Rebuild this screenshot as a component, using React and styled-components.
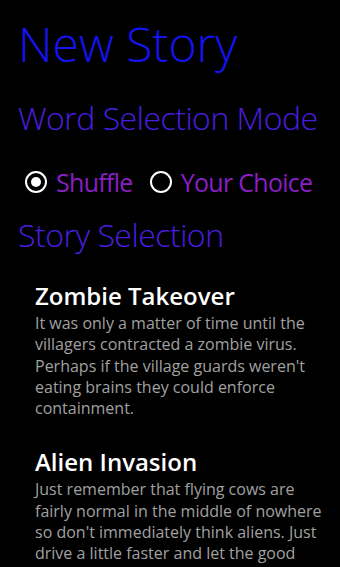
import React, { useState } from 'react';
import styled, { createGlobalStyle } from 'styled-components';

const GlobalStyle = createGlobalStyle`
  html, body {
    margin: 0;
    padding: 0;
    background: #000;
  }
  body {
    font-family: "Open Sans", "Noto Sans", sans-serif;
    overflow: hidden;
  }
`;

const stories = [
  {
    title: 'Zombie Takeover',
    text: "It was only a matter of time until the villagers contracted a zombie virus. Perhaps if the village guards weren't eating brains they could enforce containment.",
  },
  {
    title: 'Alien Invasion',
    text: "Just remember that flying cows are fairly normal in the middle of nowhere so don't immediately think aliens. Just drive a little faster and let the good people of the town deal with it.",
  },
];

export default function App() {
  const [mode, setMode] = useState('shuffle');

  return (
    <>
      <GlobalStyle />
      <Page>
        <PageTitle>New Story</PageTitle>
        <SectionTitle>Word Selection Mode</SectionTitle>
        <RadioRow>
          <RadioOption onClick={() => setMode('shuffle')}>
            <RadioCircle checked={mode === 'shuffle'} />
            <RadioLabel>Shuffle</RadioLabel>
          </RadioOption>
          <RadioOption onClick={() => setMode('choice')}>
            <RadioCircle checked={mode === 'choice'} />
            <RadioLabel>Your Choice</RadioLabel>
          </RadioOption>
        </RadioRow>
        <SectionTitle $tight>Story Selection</SectionTitle>
        <StoryList>
          {stories.map((s) => (
            <StoryItem key={s.title}>
              <StoryTitle>{s.title}</StoryTitle>
              <StoryText>{s.text}</StoryText>
            </StoryItem>
          ))}
        </StoryList>
      </Page>
    </>
  );
}

const Page = styled.div`
  height: 567px;
  overflow: hidden;
  padding: 12px 0 0 18px;
  box-sizing: border-box;
`;

const PageTitle = styled.h1`
  margin: 0;
  font-size: 48px;
  font-weight: 300;
  line-height: 64px;
  color: #1414f0;
`;

const SectionTitle = styled.h2`
  margin: ${(p) => (p.$tight ? '14px' : '20px')} 0 0;
  font-size: 32px;
  font-weight: 300;
  line-height: 44px;
  color: #4a1ee0;
  letter-spacing: -0.5px;
`;

const RadioRow = styled.div`
  display: flex;
  align-items: center;
  gap: 17px;
  padding-left: 7px;
  margin-top: 25px;
`;

const RadioOption = styled.label`
  display: flex;
  align-items: center;
  gap: 9px;
  cursor: pointer;
`;

const RadioCircle = styled.span`
  width: 22px;
  height: 22px;
  box-sizing: border-box;
  border: 2.5px solid #fff;
  border-radius: 50%;
  display: flex;
  align-items: center;
  justify-content: center;

  &::after {
    content: '';
    width: 10px;
    height: 10px;
    border-radius: 50%;
    background: #fff;
    display: ${(p) => (p.checked ? 'block' : 'none')};
  }
`;

const RadioLabel = styled.span`
  font-size: 25px;
  line-height: 34px;
  color: #8a1fc6;
  letter-spacing: -0.7px;
`;

const StoryList = styled.div`
  width: 290px;
  padding: 24px 0 0 17px;
  display: flex;
  flex-direction: column;
  gap: 28px;
`;

const StoryItem = styled.div``;

const StoryTitle = styled.div`
  font-size: 24px;
  font-weight: 600;
  line-height: 30px;
  margin-bottom: 2px;
  color: #fff;
`;

const StoryText = styled.div`
  font-size: 16px;
  line-height: 21.3px;
  color: #a0a0a0;
`;
